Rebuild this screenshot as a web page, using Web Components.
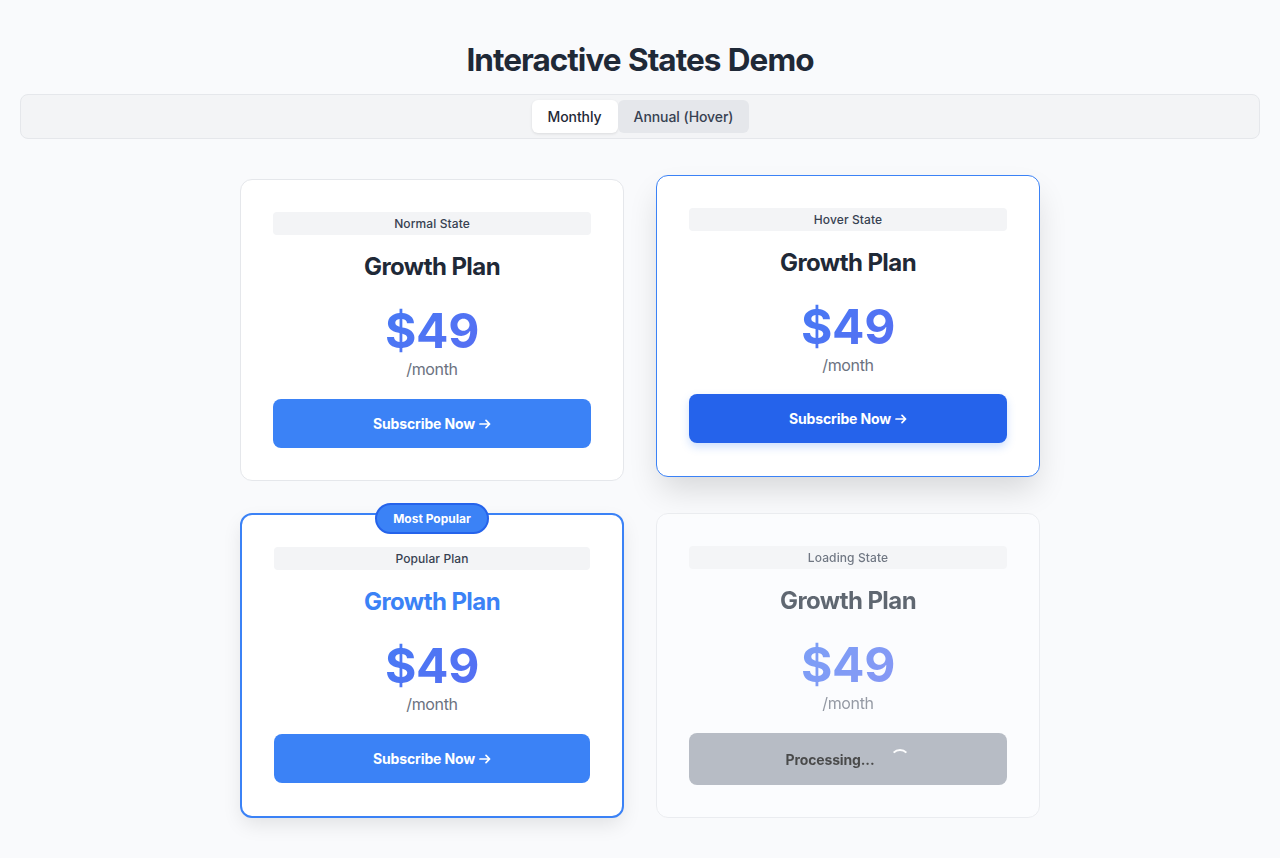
<!DOCTYPE html>
<html lang="en">
<head>
<meta charset="utf-8">
<title>Interactive States Demo</title>
<style>
body{margin:0;background:#f9fafc;font-family:Inter,"Liberation Sans",sans-serif;color:#1f2937}
</style>
</head>
<body>
<demo-page>
  <billing-toggle slot="toggle">
    <billing-option active>Monthly</billing-option>
    <billing-option hover>Annual (Hover)</billing-option>
  </billing-toggle>
  <plan-card label="Normal State"><plan-button>Subscribe Now <arrow-icon></arrow-icon></plan-button></plan-card>
  <plan-card label="Hover State" state="hover"><plan-button state="hover">Subscribe Now <arrow-icon></arrow-icon></plan-button></plan-card>
  <plan-card label="Popular Plan" state="popular"><plan-button>Subscribe Now <arrow-icon></arrow-icon></plan-button></plan-card>
  <plan-card label="Loading State" state="loading"><plan-button state="loading">Processing...</plan-button></plan-card>
</demo-page>
<script>
const define = (name, html, setup) => customElements.define(name, class extends HTMLElement {
  constructor() {
    super();
    const t = document.createElement('template');
    t.innerHTML = html;
    this.attachShadow({mode: 'open'}).append(t.content.cloneNode(true));
    if (setup) setup(this, this.shadowRoot);
  }
});

define('demo-page', `<style>
:host{display:block;box-sizing:border-box;height:858px;padding:40px 20px 40px;overflow:hidden}
h1{margin:0 0 14px;font-size:31.5px;line-height:40px;font-weight:650;letter-spacing:-.98px;word-spacing:1px;text-align:center;white-space:nowrap}
.grid{display:grid;grid-template-columns:384px 384px;grid-template-rows:302px 305px;gap:32px;justify-content:center;margin-top:40px}
</style><h1>Interactive States Demo</h1><slot name="toggle"></slot><div class="grid"><slot></slot></div>`);

define('billing-toggle', `<style>
:host{display:flex;justify-content:center;box-sizing:border-box;height:45px;padding:5px;background:#f3f4f6;border:1px solid #e5e7eb;border-radius:8px}
</style><slot></slot>`);

define('billing-option', `<style>
:host{display:block;box-sizing:border-box;height:33px;line-height:34px;text-align:center;border-radius:6px;font-size:14px;font-weight:500;letter-spacing:-.07px;color:#374151;white-space:nowrap}
:host([active]){background:#fff;color:#1f2937;box-shadow:0 1px 3px rgba(0,0,0,.1);width:86px}
:host([hover]){background:#e5e7eb;width:131px;padding-left:1px}
</style><slot></slot>`);

define('arrow-icon', `<style>
:host{display:block;width:12px;height:12px;margin-left:4px}
svg{display:block}
</style><svg width="12" height="12" viewBox="0 0 12 12" fill="none" stroke="currentColor" stroke-width="1.7" stroke-linecap="round" stroke-linejoin="round"><path d="M1 6H10.5M7 2.4L10.6 6L7 9.6"/></svg>`);

define('plan-button', `<style>
:host{display:flex;align-items:center;justify-content:center;height:49px;margin-top:18px;border-radius:8px;background:#3b82f6;color:#fff;font-size:14px;font-weight:650;letter-spacing:-.14px;line-height:20px;white-space:nowrap}
:host([state=hover]){background:#2563eb;box-shadow:0 4px 8px rgba(59,130,246,.25);transform:translateY(-1px)}
:host([state=loading]){box-sizing:border-box;height:52px;padding-top:1px;background:#9ca3af;color:#000;gap:16px}
.spin{display:none;box-sizing:border-box;width:20px;height:20px;margin-bottom:2px;border:2px solid transparent;border-top-color:#fff;border-radius:50%}
:host([state=loading]) .spin{display:block}
</style><slot></slot><span class="spin"></span>`);

define('plan-card', `<style>
:host{display:block;position:relative;box-sizing:border-box;padding:32px;background:#fff;border:1px solid #e5e7eb;border-radius:12px;text-align:center}
:host([state=hover]){border-color:#3b82f6;transform:translateY(-4px);box-shadow:0 16px 32px -4px rgba(0,0,0,.14)}
:host([state=popular]){border:2px solid #3b82f6;box-shadow:0 8px 20px -2px rgba(0,0,0,.1)}
:host([state=loading]){opacity:.7;background:#fdfeff}
.label{height:23px;line-height:23px;border-radius:4px;background:#f3f4f6;color:#374151;font-size:12px;font-weight:500;letter-spacing:.1px}
h2{margin:16px 0 24px;font-size:24px;line-height:32px;font-weight:680;letter-spacing:-.58px}
:host([state=popular]) h2{color:#3b82f6}
.price{font-size:48px;line-height:48px;font-weight:700;letter-spacing:-.4px;background:linear-gradient(135deg,#3b82f6,#6366f1);-webkit-background-clip:text;background-clip:text;color:transparent}
.period{margin-top:2px;font-size:16px;line-height:24px;letter-spacing:-.35px;color:#6b7280}
.badge{display:none;position:absolute;top:-12px;left:50%;transform:translateX(-50%);box-sizing:border-box;width:114px;height:31px;line-height:27px;border:2px solid #2563eb;border-radius:16px;background:#3b82f6;color:#fff;font-size:12px;font-weight:650;white-space:nowrap}
:host([state=popular]) .badge{display:block}
</style><div class="badge">Most Popular</div><div class="label"></div><h2>Growth Plan</h2><div class="price">$49</div><div class="period">/month</div><slot></slot>`,
(host, root) => { root.querySelector('.label').textContent = host.getAttribute('label'); });
</script>
</body>
</html>
